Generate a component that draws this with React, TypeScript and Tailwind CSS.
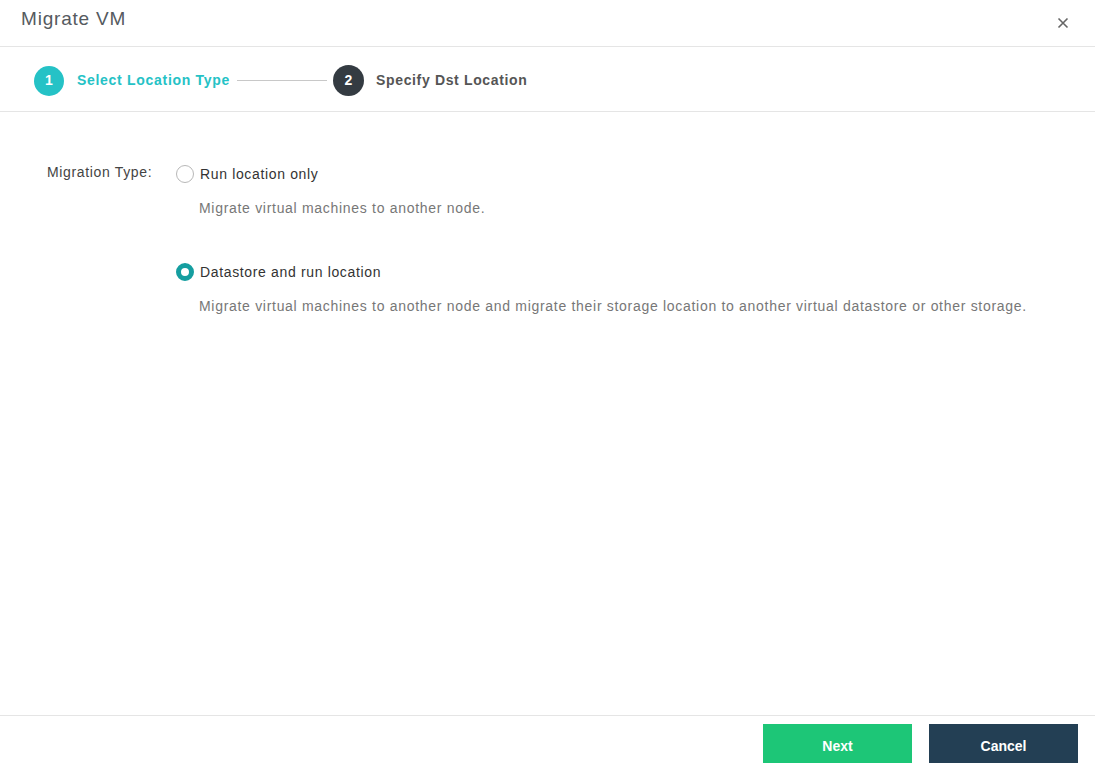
import React, { useState } from "react";

export default function App() {
  const [sel, setSel] = useState(1);
  const font = { fontFamily: '"Liberation Sans", Arial, sans-serif' };
  return (
    <div className="w-[1095px] h-[763px] bg-white flex flex-col overflow-hidden" style={font}>
      <div className="h-[47px] shrink-0 flex items-center justify-between pl-[21px] pr-[26px] border-b border-[#e5e5e5]">
        <div className="text-[19px] tracking-[0.8px] text-[#555a60] -mt-[8px]">Migrate VM</div>
        <svg width="12" height="12" viewBox="0 0 12 12" className="mt-[0px]">
          <path d="M1.5 1.5 L10.5 10.5 M10.5 1.5 L1.5 10.5" stroke="#666" strokeWidth="1.6" />
        </svg>
      </div>
      <div className="h-[65px] shrink-0 flex items-center pl-[34px] pt-[3px] border-b border-[#e5e5e5]">
        <div className="w-[30px] h-[30px] rounded-full bg-[#25c2c6] text-white flex items-center justify-center text-[14px] font-bold">1</div>
        <div className="ml-[13px] text-[14px] tracking-[0.7px] font-bold text-[#25c2c6]">Select Location Type</div>
        <div className="ml-[7px] w-[90px] h-px bg-[#c8c8c8]" />
        <div className="ml-[6px] w-[31px] h-[31px] rounded-full bg-[#343b42] text-white flex items-center justify-center text-[14px] font-bold">2</div>
        <div className="ml-[12px] text-[14px] tracking-[0.65px] font-bold text-[#555]">Specify Dst Location</div>
      </div>
      <div className="flex-1 flex pt-[53px] pl-[47px]">
        <div className="w-[129px] text-[14px] tracking-[0.65px] text-[#444] leading-[18px] -mt-[2px]">Migration Type:</div>
        <div className="flex flex-col">
          <label className="flex items-center cursor-pointer -mt-[1px]" onClick={() => setSel(0)}>
            <span className={sel === 0 ? "w-[18px] h-[18px] rounded-full border-[5px] border-[#159ea0] bg-white" : "w-[18px] h-[18px] rounded-full border border-[#b8b8b8] bg-white"} />
            <span className="ml-[6px] text-[14px] tracking-[0.65px] text-[#333] leading-[20px]">Run location only</span>
          </label>
          <div className="ml-[23px] mt-[14px] text-[14px] tracking-[0.7px] text-[#777]">Migrate virtual machines to another node.</div>
          <label className="flex items-center cursor-pointer mt-[43px]" onClick={() => setSel(1)}>
            <span className={sel === 1 ? "w-[18px] h-[18px] rounded-full border-[5px] border-[#159ea0] bg-white" : "w-[18px] h-[18px] rounded-full border border-[#b8b8b8] bg-white"} />
            <span className="ml-[6px] text-[14px] tracking-[0.65px] text-[#333] leading-[20px]">Datastore and run location</span>
          </label>
          <div className="ml-[23px] mt-[14px] text-[14px] tracking-[0.7px] text-[#777]">Migrate virtual machines to another node and migrate their storage location to another virtual datastore or other storage.</div>
        </div>
      </div>
      <div className="h-[48px] shrink-0 border-t border-[#e5e5e5] flex justify-end items-start pt-[8px] pr-[17px] gap-[17px]">
        <button className="w-[149px] h-[44px] bg-[#1dc677] text-white text-[14px] font-bold">Next</button>
        <button className="w-[149px] h-[44px] bg-[#233f54] text-white text-[14px] font-bold">Cancel</button>
      </div>
    </div>
  );
}
